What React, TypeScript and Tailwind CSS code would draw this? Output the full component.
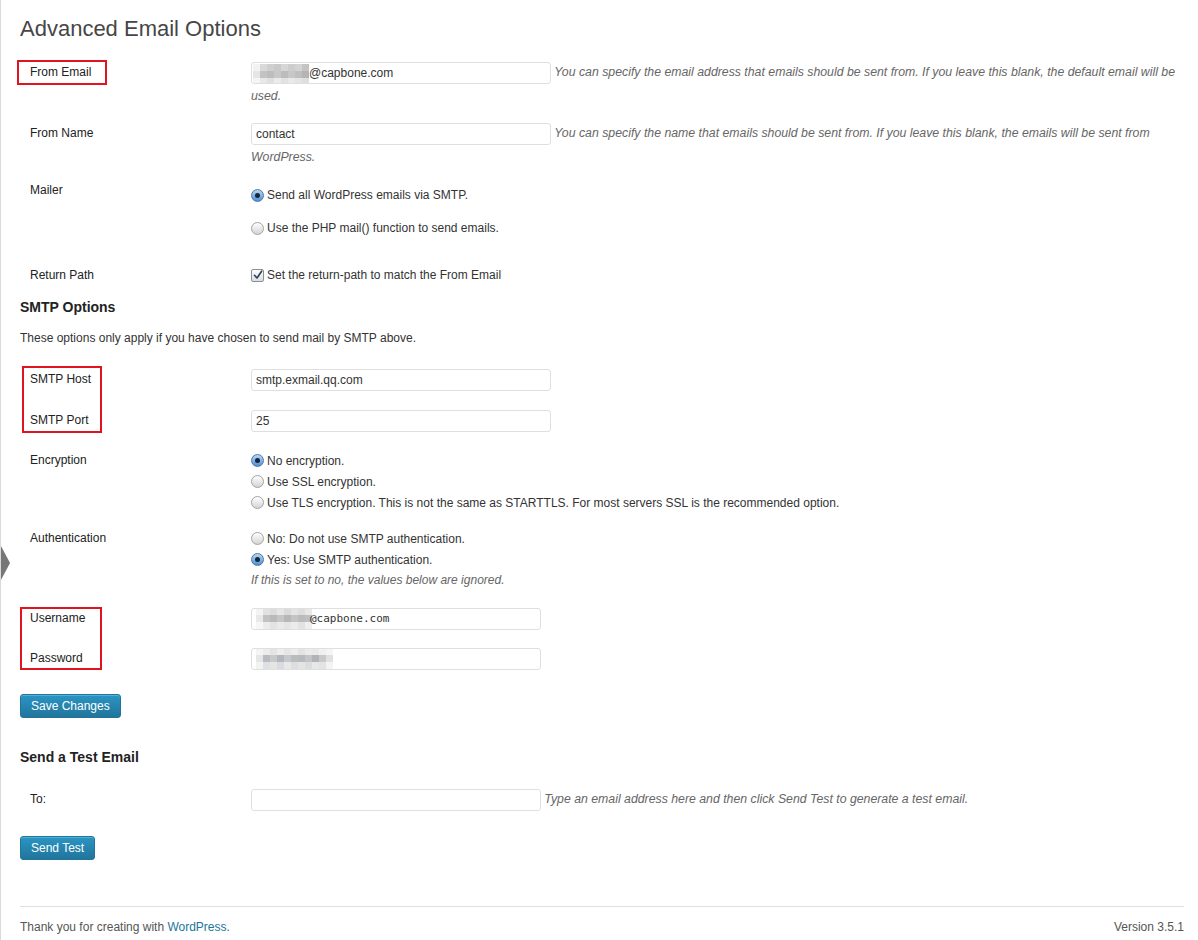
import React from 'react';

type Cells = string[][];

const Mosaic = ({ cells, cw, ch }: { cells: Cells; cw: number; ch: number }) => (
  <span className="inline-flex flex-col shrink-0">
    {cells.map((row, i) => (
      <span key={i} className="flex">
        {row.map((c, j) => (
          <span key={j} style={{ width: cw, height: ch, background: c }} />
        ))}
      </span>
    ))}
  </span>
);

const emailCells: Cells = [
  ['#f2f2f2', '#d9d9d9', '#cfcfcf', '#c9c9c9', '#d6d6d6', '#cdcdcd', '#d3d3d3', '#c4c4c4'],
  ['#e6e6e6', '#c3c3c3', '#bdbdbd', '#c8c8c8', '#bcbcbc', '#c7c7c7', '#bfbfbf', '#b4b4b4'],
  ['#f5f5f5', '#e8e8e8', '#e0e0e0', '#ebebeb', '#e2e2e2', '#e9e9e9', '#e4e4e4', '#dedede'],
];
const userCells: Cells = [
  ['#f4f4f4', '#e2e2e2', '#dcdcdc', '#e6e6e6', '#dadada', '#e4e4e4', '#dddddd', '#e8e8e8'],
  ['#e9e9e9', '#c2c2c2', '#bababa', '#c6c6c6', '#b7b7b7', '#c4c4c4', '#bbbbbb', '#bfbfbf'],
  ['#f6f6f6', '#ececec', '#e3e3e3', '#eaeaea', '#e5e5e5', '#ebebeb', '#e2e2e2', '#efefef'],
];
const passCells: Cells = [
  ['#f4f4f4', '#ececec', '#e4e4e4', '#eeeeee', '#e6e6e6', '#ededed', '#e3e3e3', '#ebebeb', '#e9e9e9', '#f0f0f0', '#f5f5f5'],
  ['#e6e6e6', '#b8bcc2', '#c9c9c9', '#b3b6ba', '#c5c8cc', '#bcbcbc', '#b6b9bd', '#c4c4c4', '#b0b3b8', '#c9c9c9', '#e0e0e0'],
  ['#f2f2f2', '#dee0e3', '#e5e5e5', '#d9dbde', '#e8e8e8', '#dcdee1', '#e4e4e4', '#dadcde', '#e7e7e7', '#e3e3e3', '#f3f3f3'],
];

const Field = ({ w = 300, children, className = '' }: { w?: number; children?: React.ReactNode; className?: string }) => (
  <span
    className={`inline-flex items-center align-middle h-[22px] border border-[#dfdfdf] rounded-[3px] bg-white pl-[4px] text-[12px] text-[#333] leading-none overflow-hidden ${className}`}
    style={{ width: w }}
  >
    {children}
  </span>
);

const Radio = ({ checked = false }: { checked?: boolean }) =>
  checked ? (
    <span className="inline-flex items-center justify-center w-[13px] h-[13px] rounded-full border border-[#4d78a8] bg-gradient-to-b from-[#b9d6f3] to-[#4f90d4] mr-[3px] shrink-0">
      <span className="w-[5px] h-[5px] rounded-full bg-[#14263a]" />
    </span>
  ) : (
    <span className="inline-block w-[13px] h-[13px] rounded-full border border-[#a3a3a3] bg-gradient-to-b from-[#ffffff] to-[#d4d4d4] mr-[3px] shrink-0" />
  );

const Checkbox = () => (
  <span className="inline-flex items-center justify-center w-[13px] h-[13px] border border-[#8e8e8e] rounded-[2px] bg-gradient-to-b from-[#fdfdfd] to-[#d9dde3] mr-[3px] shrink-0">
    <svg width="10" height="10" viewBox="0 0 10 10">
      <path d="M1.5 5.3 L4 8 L8.6 1.2" fill="none" stroke="#2d3f5e" strokeWidth="1.6" strokeLinecap="round" strokeLinejoin="round" />
    </svg>
  </span>
);

const Label = ({ children, lh = 18 }: { children: React.ReactNode; lh?: number }) => (
  <div className="w-[231px] shrink-0 pl-[10px] text-[12px] text-[#222]" style={{ lineHeight: `${lh}px` }}>
    {children}
  </div>
);

const Desc = ({ children }: { children: React.ReactNode }) => (
  <span className="italic text-[#666] text-[12.3px]">{children}</span>
);

const Opt = ({ checked, children, h = 18 }: { checked?: boolean; children: React.ReactNode; h?: number }) => (
  <div className="flex items-center text-[12px] text-[#333]" style={{ height: h }}>
    <Radio checked={checked} />
    <span>{children}</span>
  </div>
);

const Button = ({ children }: { children: React.ReactNode }) => (
  <div className="inline-flex items-center h-[24px] px-[10px] rounded-[3px] border border-[#21759b] bg-gradient-to-b from-[#2a95c5] to-[#21759b] text-white text-[12px] shadow-[inset_0_1px_0_rgba(120,200,230,0.5)]">
    {children}
  </div>
);

export default function App() {
  return (
    <div className="relative w-[1198px] h-[940px] overflow-hidden bg-white border-l border-[#d9d9d9] font-['Liberation_Sans',Arial,sans-serif] text-[#333]">
      {/* admin menu arrow */}
      <div className="absolute left-0 top-[546px] w-0 h-0 border-t-[17px] border-b-[17px] border-l-[9px] border-t-transparent border-b-transparent border-l-[#777]" />

      <div className="pl-[19px] pr-[14px]">
        <div className="h-[50px] pt-[14px] text-[22px] leading-[29px] text-[#464646]">Advanced Email Options</div>

        {/* From Email */}
        <div className="relative flex h-[61px] pt-[10px]">
          <div className="absolute left-[-3px] top-[10px] w-[90px] h-[25px] border-2 border-[#e0141e]" />
          <Label lh={24}>From Email</Label>
          <div className="flex-1 text-[12px] leading-[24px]">
            <Field>
              <span className="-ml-[3px] mr-0">
                <Mosaic cells={emailCells} cw={7} ch={7} />
              </span>
              <span>@capbone.com</span>
            </Field>{' '}
            <Desc>
              You can specify the email address that emails should be sent from. If you leave this blank, the default email will be used.
            </Desc>
          </div>
        </div>

        {/* From Name */}
        <div className="flex h-[60px] pt-[10px]">
          <Label lh={24}>From Name</Label>
          <div className="flex-1 text-[12px] leading-[24px]">
            <Field>contact</Field>{' '}
            <Desc>
              You can specify the name that emails should be sent from. If you leave this blank, the emails will be sent from WordPress.
            </Desc>
          </div>
        </div>

        {/* Mailer */}
        <div className="flex h-[85px] pt-[10px]">
          <Label>Mailer</Label>
          <div className="flex-1 pt-[5px] flex flex-col gap-[15px]">
            <Opt checked>Send all WordPress emails via SMTP.</Opt>
            <Opt>Use the PHP mail() function to send emails.</Opt>
          </div>
        </div>

        {/* Return Path */}
        <div className="flex h-[41px] pt-[10px]">
          <Label>Return Path</Label>
          <div className="flex-1 flex items-center h-[18px] text-[12px]">
            <Checkbox />
            <span>Set the return-path to match the From Email</span>
          </div>
        </div>

        <div className="h-[20px] leading-[20px] text-[14px] font-bold text-[#222]">SMTP Options</div>
        <div className="mt-[12px] h-[18px] leading-[18px] text-[12px] text-[#333]">
          These options only apply if you have chosen to send mail by SMTP above.
        </div>

        {/* SMTP Host / Port */}
        <div className="relative mt-[10px]">
          <div className="absolute left-[2px] top-[9px] w-[80px] h-[67px] border-2 border-[#e0141e]" />
          <div className="flex h-[41px] pt-[10px]">
            <Label lh={24}>SMTP Host</Label>
            <div className="flex-1 leading-[24px]">
              <Field>smtp.exmail.qq.com</Field>
            </div>
          </div>
          <div className="flex h-[42px] pt-[10px]">
            <Label lh={24}>SMTP Port</Label>
            <div className="flex-1 leading-[24px]">
              <Field>25</Field>
            </div>
          </div>
        </div>

        {/* Encryption */}
        <div className="flex h-[78px] pt-[10px]">
          <Label lh={21}>Encryption</Label>
          <div className="flex-1 flex flex-col">
            <Opt checked h={21}>No encryption.</Opt>
            <Opt h={21}>Use SSL encryption.</Opt>
            <Opt h={21}>Use TLS encryption. This is not the same as STARTTLS. For most servers SSL is the recommended option.</Opt>
          </div>
        </div>

        {/* Authentication */}
        <div className="flex h-[78px] pt-[10px]">
          <Label lh={21}>Authentication</Label>
          <div className="flex-1 flex flex-col">
            <Opt h={21}>No: Do not use SMTP authentication.</Opt>
            <Opt checked h={21}>Yes: Use SMTP authentication.</Opt>
            <div className="h-[20px] leading-[20px] text-[12px] italic text-[#666]">If this is set to no, the values below are ignored.</div>
          </div>
        </div>

        {/* Username / Password */}
        <div className="relative">
          <div className="absolute left-0 top-[11px] w-[82px] h-[63px] border-2 border-[#e0141e]" />
          <div className="flex h-[40px] pt-[10px]">
            <Label lh={24}>Username</Label>
            <div className="flex-1 leading-[24px]">
              <Field w={290} className="pl-0">
                <Mosaic cells={userCells} cw={7} ch={7} />
                <span className="-ml-[2px] font-['DejaVu_Sans_Mono',monospace] text-[11px]">@capbone.com</span>
              </Field>
            </div>
          </div>
          <div className="flex h-[40px] pt-[10px]">
            <Label lh={24}>Password</Label>
            <div className="flex-1 leading-[24px]">
              <Field w={290} className="pl-0">
                <Mosaic cells={passCells} cw={7} ch={7} />
              </Field>
            </div>
          </div>
        </div>

        <div className="pt-[17px] h-[41px]">
          <Button>Save Changes</Button>
        </div>

        <div className="mt-[30px] h-[20px] leading-[20px] text-[14px] font-bold text-[#222]">Send a Test Email</div>

        <div className="flex h-[41px] pt-[10px] mt-[10px]">
          <Label lh={24}>To:</Label>
          <div className="flex-1 text-[12px] leading-[24px]">
            <Field w={290} />{' '}
            <Desc>Type an email address here and then click Send Test to generate a test email.</Desc>
          </div>
        </div>

        <div className="mt-[17px] h-[24px]">
          <Button>Send Test</Button>
        </div>

        <div className="mt-[47px] border-t border-[#dfdfdf]" />
        <div className="mt-[11px] flex justify-between text-[12px] leading-[18px] text-[#555]">
          <span>
            Thank you for creating with <span className="text-[#21759b]">WordPress</span>.
          </span>
          <span>Version 3.5.1</span>
        </div>
      </div>
    </div>
  );
}
